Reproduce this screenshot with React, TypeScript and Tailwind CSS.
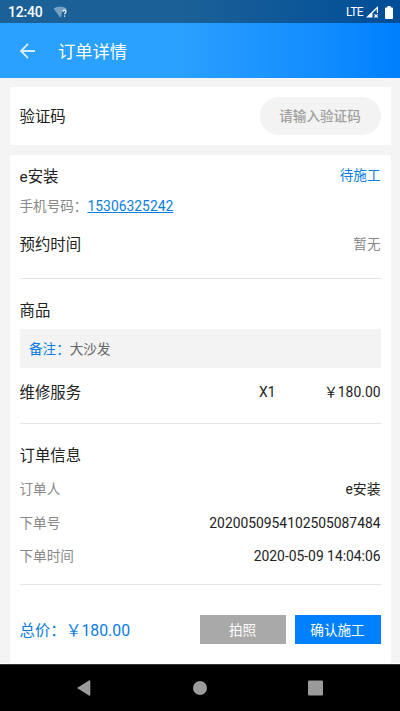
import type { ReactNode } from "react";
import clsx from "clsx";

const ORDER_INFO = [
  { label: "订单人", value: "e安装" },
  { label: "下单号", value: "2020050954102505087484" },
  { label: "下单时间", value: "2020-05-09 14:04:06" },
];

function StatusBar() {
  return (
    <div className="flex h-[23px] shrink-0 items-center justify-between bg-linear-to-r from-[#1b6197] from-45% to-[#004d98] pt-px pr-[7px] pl-2 text-white">
      <div className="flex items-center">
        <span className="text-[14px] leading-none font-medium tracking-[-0.2px]">12:40</span>
        <svg className="ml-2.5 h-3 w-[15px]" viewBox="0 0 15 12">
          <path d="M0.5 2.5C4.5-0.3 9.7-0.3 13.8 2.5L11.5 5H9.2L8.3 10.4L7.1 11.5Z" fill="#76a0c1" />
          <path d="M10 5.7C10 4.6 10.7 4.1 11.5 4.1C12.4 4.1 13.1 4.6 13.1 5.5C13.1 6.7 11.6 6.8 11.6 8.3M11.6 9.6V10.8" fill="none" stroke="#fff" strokeWidth="1.2" />
        </svg>
      </div>
      <div className="flex items-center">
        <span className="text-xs leading-none tracking-[-0.6px]">LTE</span>
        <svg className="ml-[3px] h-3 w-[13px]" viewBox="0 0 13 12">
          <path d="M12 0V7H10.8V3L6.5 7.2V11.5H0Z" fill="#fff" />
          <path d="M8.5 8.3L11.7 11.5M11.7 8.3L8.5 11.5" stroke="#fff" strokeWidth="1.2" />
        </svg>
        <svg className="ml-[6px] h-[13px] w-2" viewBox="0 0 8 13">
          <path d="M2.3 0H5.7V1.4H7.2Q8 1.4 8 2.2V12.2Q8 13 7.2 13H0.8Q0 13 0 12.2V2.2Q0 1.4 0.8 1.4H2.3Z" fill="#fff" />
        </svg>
      </div>
    </div>
  );
}

function Header() {
  return (
    <header className="flex h-[55px] shrink-0 items-center bg-linear-to-r from-[#2aa0ff] from-45% to-[#0080ff] pl-5 text-white">
      <svg className="h-4 w-[15px]" viewBox="0 0 15 16" fill="none" stroke="#d5edff" strokeWidth="1.8">
        <path d="M15 8H1.2M8 0.8L1 8L8 15.2" />
      </svg>
      <h1 className="ml-[23px] pt-[4px] text-[17.3px] leading-none">订单详情</h1>
    </header>
  );
}

function Row({ className, children }: { className?: string; children: ReactNode }) {
  return <div className={clsx("flex items-center justify-between", className)}>{children}</div>;
}

function Title({ children }: { children: ReactNode }) {
  return <h2 className="pt-[3px] text-[15.4px] text-[#222]">{children}</h2>;
}

function Divider() {
  return <div className="h-px bg-[#e6e6e6]" />;
}

function NavBar() {
  return (
    <nav className="h-[47px] shrink-0 border-t border-[#333] bg-black">
      <svg className="h-[46px] w-full" viewBox="0 0 400 46" fill="#9b9b9b">
        <path d="M77 23L89.3 15.3Q90.3 15 90.3 16V30Q90.3 31 89.3 30.7Z" />
        <circle cx="200" cy="23" r="7" />
        <rect x="308" y="15.5" width="15" height="15" rx="1" />
      </svg>
    </nav>
  );
}

export default function App() {
  return (
    <div className="flex h-[711px] w-[400px] flex-col overflow-hidden bg-[#f4f4f4] font-['Roboto','Noto_Sans_CJK_SC',sans-serif] text-[13.6px] leading-none">
      <StatusBar />
      <Header />
      <main className="flex min-h-0 flex-1 flex-col gap-2.5 border-b border-white px-[9.5px] pt-[9px]">
        <section className="flex h-[58px] shrink-0 items-center justify-between bg-white px-2.5">
          <Title>验证码</Title>
          <div className="flex h-[38px] w-[121px] items-center justify-center rounded-full bg-[#f3f3f3] pt-[2px] font-medium text-[#a0a0a0]">
            请输入验证码
          </div>
        </section>

        <section className="min-h-0 flex-1 bg-white px-2.5 pt-[5px]">
          <Row className="h-8">
            <Title>e安装</Title>
            <span className="text-[#0a7de0]">待施工</span>
          </Row>
          <div className="flex h-[28px] items-center pt-[2px] text-[#888]">
            手机号码：
            <a className="text-[13.9px] text-[#0a7de0] underline">15306325242</a>
          </div>
          <Row className="h-[48px]">
            <Title>预约时间</Title>
            <span className="pt-px text-[#888]">暂无</span>
          </Row>
          <div className="h-[10px]" />
          <Divider />
          <div className="flex h-[50px] items-center pt-3">
            <Title>商品</Title>
          </div>
          <div className="flex h-[39px] items-center bg-[#f3f3f3] px-[9.5px] pt-[3px] text-[#666]">
            <span className="text-[#0a7de0]">备注：</span>大沙发
          </div>
          <Row className="h-[49px]">
            <Title>维修服务</Title>
            <div className="flex text-[13.9px] text-[#222]">
              <span>X1</span>
              <span className="w-[105px] text-right">￥180.00</span>
            </div>
          </Row>
          <div className="h-[6px]" />
          <Divider />
          <div className="flex h-[49px] items-center pt-[13px]">
            <Title>订单信息</Title>
          </div>
          {ORDER_INFO.map(({ label, value }) => (
            <Row key={label} className="h-[33.3px] pt-px">
              <span className="text-[#888]">{label}</span>
              <span className="text-[13.85px] text-[#222]">{value}</span>
            </Row>
          ))}
          <div className="h-[11px]" />
          <Divider />
          <Row className="h-[89px]">
            <span className="pt-[3px] text-[15.4px] text-[#0a7de0]">
              总价：<span className="text-[15.8px]">￥180.00</span>
            </span>
            <div className="flex gap-[9px] text-white">
              <button className="h-[29px] w-[86px] bg-[#a9a9a9] pt-[2px]">拍照</button>
              <button className="h-[29px] w-[86px] bg-[#0080ff] pt-[2px]">确认施工</button>
            </div>
          </Row>
        </section>
      </main>
      <NavBar />
    </div>
  );
}
